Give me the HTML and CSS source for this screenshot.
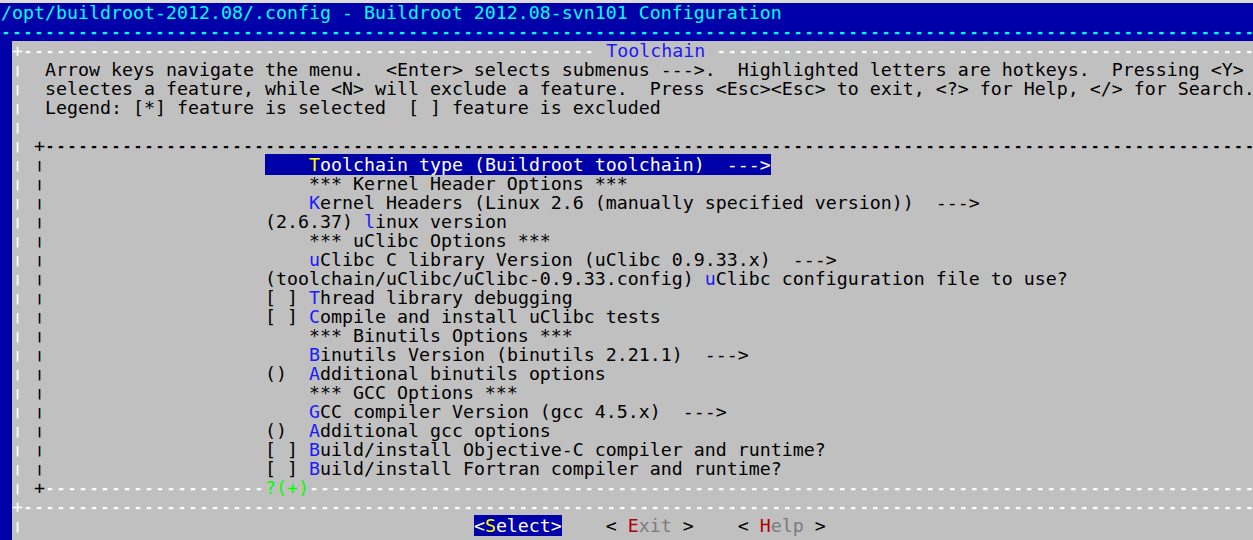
FILE: index.html
```html
<!DOCTYPE html>
<html lang="en">
<head>
<meta charset="UTF-8" />
<title>Buildroot 2012.08-svn101 Configuration</title>
<link rel="stylesheet" href="styles.css">
</head>
<body>

<div class="screen">
  <div class="r c">/opt/buildroot-2012.08/.config - Buildroot 2012.08-svn101 Configuration</div>
  <div class="r c"><span class="ln">-------------------------------------------------------------------------------------------------------------------</span></div>

  <div class="dialog">
    <div class="r w">+<span class="ln">----------------------------------------------------</span><span class="t"> Toolchain </span><span class="ln">----------------------------------------------------</span></div>
    <div class="r"><span class="vb w">|</span>  Arrow keys navigate the menu.  &lt;Enter&gt; selects submenus ---&gt;.  Highlighted letters are hotkeys.  Pressing &lt;Y&gt;</div>
    <div class="r"><span class="vb w">|</span>  selectes a feature, while &lt;N&gt; will exclude a feature.  Press &lt;Esc&gt;&lt;Esc&gt; to exit, &lt;?&gt; for Help, &lt;/&gt; for Search.</div>
    <div class="r"><span class="vb w">|</span>  Legend: [*] feature is selected  [ ] feature is excluded</div>
    <div class="r"><span class="vb w">|</span></div>
    <div class="r"><span class="vb w">|</span> +<span class="ln">--------------------------------------------------------------------------------------------------------------</span></div>

    <div class="menu">
      <div class="r"><span class="vb w">|</span> <span class="vb">|</span>                    <span class="hl">    <span class="y">T</span>oolchain type (Buildroot toolchain)  ---&gt;</span></div>
      <div class="r"><span class="vb w">|</span> <span class="vb">|</span>                        *** Kernel Header Options ***</div>
      <div class="r"><span class="vb w">|</span> <span class="vb">|</span>                        <span class="b">K</span>ernel Headers (Linux 2.6 (manually specified version))  ---&gt;</div>
      <div class="r"><span class="vb w">|</span> <span class="vb">|</span>                    (2.6.37) <span class="b">l</span>inux version</div>
      <div class="r"><span class="vb w">|</span> <span class="vb">|</span>                        *** uClibc Options ***</div>
      <div class="r"><span class="vb w">|</span> <span class="vb">|</span>                        <span class="b">u</span>Clibc C library Version (uClibc 0.9.33.x)  ---&gt;</div>
      <div class="r"><span class="vb w">|</span> <span class="vb">|</span>                    (toolchain/uClibc/uClibc-0.9.33.config) <span class="b">u</span>Clibc configuration file to use?</div>
      <div class="r"><span class="vb w">|</span> <span class="vb">|</span>                    [ ] <span class="b">T</span>hread library debugging</div>
      <div class="r"><span class="vb w">|</span> <span class="vb">|</span>                    [ ] <span class="b">C</span>ompile and install uClibc tests</div>
      <div class="r"><span class="vb w">|</span> <span class="vb">|</span>                        *** Binutils Options ***</div>
      <div class="r"><span class="vb w">|</span> <span class="vb">|</span>                        <span class="b">B</span>inutils Version (binutils 2.21.1)  ---&gt;</div>
      <div class="r"><span class="vb w">|</span> <span class="vb">|</span>                    ()  <span class="b">A</span>dditional binutils options</div>
      <div class="r"><span class="vb w">|</span> <span class="vb">|</span>                        *** GCC Options ***</div>
      <div class="r"><span class="vb w">|</span> <span class="vb">|</span>                        <span class="b">G</span>CC compiler Version (gcc 4.5.x)  ---&gt;</div>
      <div class="r"><span class="vb w">|</span> <span class="vb">|</span>                    ()  <span class="b">A</span>dditional gcc options</div>
      <div class="r"><span class="vb w">|</span> <span class="vb">|</span>                    [ ] <span class="b">B</span>uild/install Objective-C compiler and runtime?</div>
      <div class="r"><span class="vb w">|</span> <span class="vb">|</span>                    [ ] <span class="b">B</span>uild/install Fortran compiler and runtime?</div>
      <div class="r"><span class="vb w">|</span> +<span class="w ln">--------------------</span><span class="g">?(+)</span><span class="w ln">------------------------------------------------------------------------------------------</span></div>
    </div>

    <div class="r w">+<span class="ln">----------------------------------------------------------------------------------------------------------------</span></div>
    <div class="r"><span class="vb w">|</span>                                         <span class="btn on">&lt;<span class="y">S</span>elect&gt;</span>    <span class="btn">&lt; <span class="r-hot">E</span><span class="gr">xit</span> &gt;</span>    <span class="btn">&lt; <span class="r-hot">H</span><span class="gr">elp</span> &gt;</span></div>
    <div class="r"><span class="vb w">|</span></div>
  </div>
</div>

</body>
</html>
```

FILE: styles.css
```css
html, body { margin: 0; height: 100%; overflow: hidden; }
body { background: #dcdcdc; }

.screen {
  margin-top: 3px; padding-left: 1px; height: 537px;
  background: #0000a8; color: #000;
  font-family: "DejaVu Sans Mono", "Liberation Mono", monospace;
  font-size: 18.27px; line-height: 19px;
}
.r { white-space: pre; height: 19px; }

.dialog {
  margin-left: 11px; background: #c0c0c0; color: #000;
  height: 500px;
}

/* box lines: shorter dashes on the same 11px cell, a bit thicker */
.ln {
  font-size: 16.5px; letter-spacing: 1.07px; vertical-align: 1px;
  text-shadow: 0 1px 0 currentColor;
}

/* vertical bars: shorter than the cell, so they read as dashes */
.vb { display: inline-block; width: 11px; transform: scaleY(0.62); }

.c { color: #00ffff; }
.w { color: #fff; }
.t { color: #1a1aff; }
.b { color: #1a1aff; }
.g { color: #00ff00; }
.y { color: #ffff00; }
.gr { color: #7c7c7c; }
.r-hot { color: #b00000; }

.hl { background: #0000a8; color: #fff; }
.btn.on { background: #0000a8; color: #fff; }
```
